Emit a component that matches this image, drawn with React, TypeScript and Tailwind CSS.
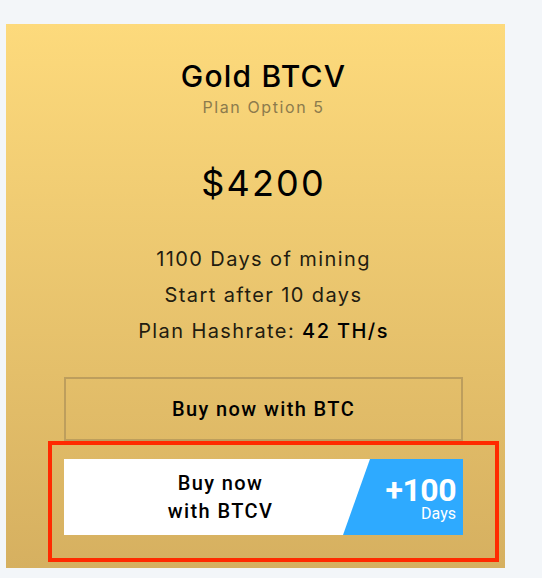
import React from "react";

export default function App() {
  return (
    <div className="min-h-[578px] w-[542px] bg-[#f3f6f9] pt-[24px] pl-[6px]">
      <div
        className="w-[499px] h-[544px] flex flex-col items-center pt-[34px] pl-[16px] bg-gradient-to-b from-[#fdda7c] to-[#d6b060]"
        style={{ fontFamily: "Inter, 'Noto Sans', sans-serif" }}
      >
        <div className="text-[30px] leading-[36px] font-medium tracking-[0.04em] text-black">Gold BTCV</div>
        <div className="mt-[3px] text-[16px] leading-[20px] tracking-[0.1em] text-[#8c7b4d]">Plan Option 5</div>
        <div className="mt-[44px] text-[36px] leading-[44px] tracking-[0.06em] text-black">$4200</div>
        <div className="mt-[36px] flex flex-col items-center text-[20px] leading-[36px] tracking-[0.07em] text-[#221c10]">
          <div>1100 Days of mining</div>
          <div>Start after 10 days</div>
          <div>
            Plan Hashrate: <span className="font-medium text-black">42 TH/s</span>
          </div>
        </div>
        <div
          className="mt-[28px] w-[399px] h-[64px] border-2 border-[#bd9e5d] flex items-center justify-center text-[20px] font-medium tracking-[0.07em] text-black"
          style={{ fontFamily: "Roboto, 'Liberation Sans', sans-serif" }}
        >
          Buy now with BTC
        </div>
        <div className="relative mt-[18px] w-[399px] h-[76px]">
          <div
            className="flex w-full h-full bg-white"
            style={{ fontFamily: "Roboto, 'Liberation Sans', sans-serif" }}
          >
            <div className="w-[279px] pl-[34px] flex flex-col items-center justify-center text-[20px] leading-[28px] font-medium tracking-[0.07em] text-black text-center">
              <span>Buy now</span>
              <span>with BTCV</span>
            </div>
            <div className="flex-1 bg-[#2eaaff] [clip-path:polygon(27px_0,100%_0,100%_100%,0_100%)] flex flex-col items-end pt-[16px] pr-[7px] text-white">
              <span className="text-[32px] leading-[30px] font-bold tracking-[-0.5px]">+100</span>
              <span className="text-[16px] leading-[16px] mt-[1px]">Days</span>
            </div>
          </div>
          <div className="absolute left-[-16px] top-[-18px] right-[-36px] bottom-[-27px] border-4 border-[#ff2a00] pointer-events-none" />
        </div>
      </div>
    </div>
  );
}
